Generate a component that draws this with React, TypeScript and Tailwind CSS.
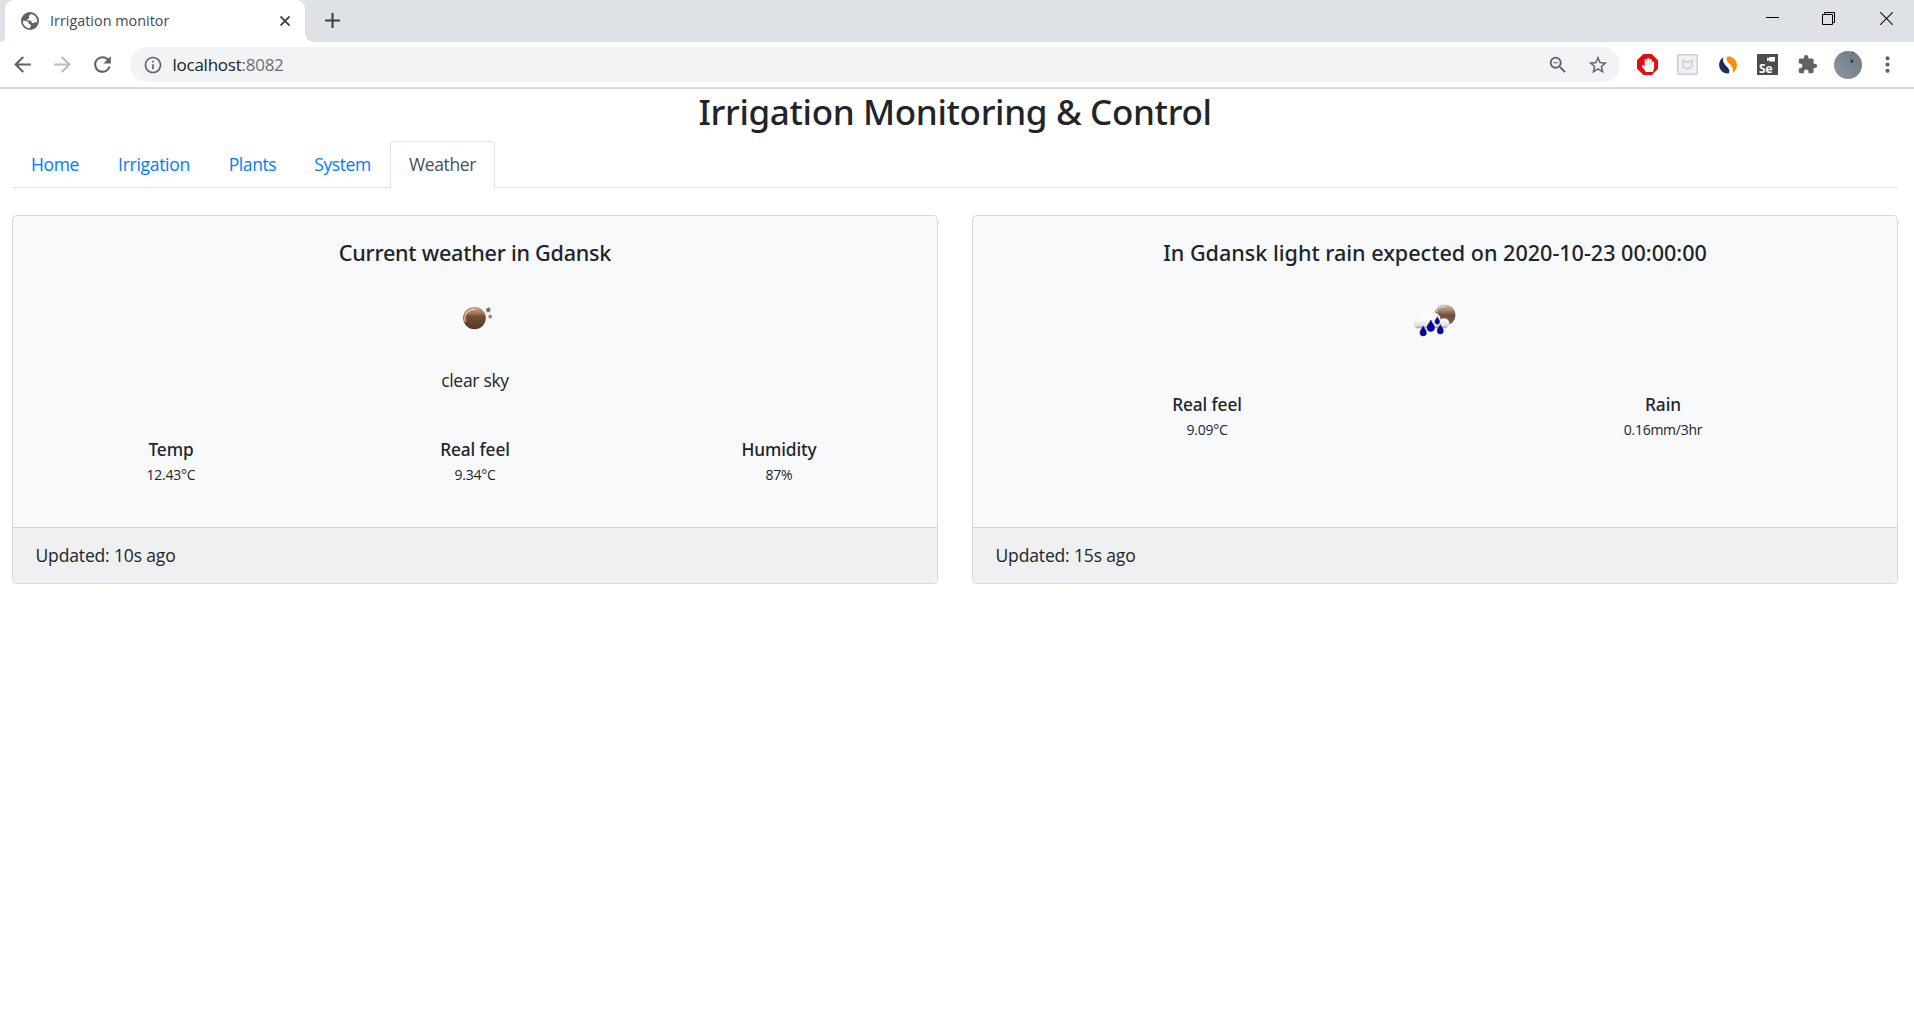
import type { ReactNode } from "react";
import {
  MdArrowBack,
  MdArrowForward,
  MdExtension,
  MdInfoOutline,
  MdMoreVert,
  MdOutlineZoomOut,
  MdRefresh,
  MdStarBorder,
} from "react-icons/md";
import { FaHandPaper } from "react-icons/fa";

const links = [
  { label: "Home", style: "w-[86px] tracking-[-0.35px]" },
  { label: "Irrigation", style: "w-[111px] pl-px tracking-[-0.3px]" },
  { label: "Plants", style: "w-[86px] pl-px tracking-[-0.4px]" },
  { label: "System", style: "w-[95px] tracking-[-0.45px]" },
];

function GlobeIcon() {
  return (
    <svg viewBox="0 0 18 18" className="size-[18px]">
      <circle cx="9" cy="9" r="9" fill="#5f6368" />
      <path
        d="M10.2 1.9c-.6.9-2 1-2.2 2-.2.9.5 1.3.3 2.1-.3.9-1.7.7-2.1 1.5-.3.7.2 1 .9 1.1 1.2.1 2.6-.2 3.3.6.7.9-.1 1.6.9 1.9 1.3.3 1.6-.9 2.8-.8.7 0 1.3.2 1.8.2A7.2 7.2 0 0 0 10.2 1.9Z"
        fill="#fff"
      />
      <path d="M1.8 8.7c1.4-.2 4.2.1 5.3 1.1.8.8.2 1.7.9 2.3.6.5 1.6.2 1.9 1 .2.9-.7 1.2-.9 3.1A7.2 7.2 0 0 1 1.8 8.7Z" fill="#fff" />
    </svg>
  );
}

function Slot({ children }: { children: ReactNode }) {
  return <div className="flex w-10 shrink-0 items-center justify-center">{children}</div>;
}

function TabStrip() {
  return (
    <div className="flex h-[42px] bg-[#dee1e6]">
      <div className="flex w-[5px] items-end bg-white">
        <div className="h-full w-full rounded-br-[5px] bg-[#dee1e6]" />
      </div>
      <div className="flex w-[300px] bg-[#dee1e6]">
        <div className="flex w-full items-center rounded-t-[9px] bg-white pl-4 pr-[15px]">
          <GlobeIcon />
          <span className="ml-[11px] flex-1 whitespace-nowrap text-[14.4px] text-[#45494d]">Irrigation monitor</span>
          <svg viewBox="0 0 10 10" className="size-[10px]" stroke="#3c4043" strokeWidth="1.9">
            <path d="M.5.5l9 9M9.5.5l-9 9" />
          </svg>
        </div>
      </div>
      <div className="w-[9px] bg-white">
        <div className="h-full rounded-bl-[9px] bg-[#dee1e6]" />
      </div>
      <svg viewBox="0 0 15 15" className="ml-[11px] mt-[13px] size-[15px]" stroke="#3c4043" strokeWidth="2.1">
        <path d="M7.5 0v15M0 7.5h15" />
      </svg>
      <div className="ml-auto flex pr-[21px] pt-3">
        <svg viewBox="0 0 13 13" className="mr-[43px] size-[13px]" fill="none" stroke="#000">
          <path d="M0 5.5h13" />
        </svg>
        <svg viewBox="0 0 13 13" className="mr-[45px] size-[13px]" fill="none" stroke="#000">
          <path d="M.5 2.5h10v10H.5zM2.5 2.5v-2h10v10h-2" />
        </svg>
        <svg viewBox="0 0 13 13" className="size-[13px]" fill="none" stroke="#111" strokeWidth="1.1">
          <path d="M.2.2l12.6 12.6M12.8.2L.2 12.8" />
        </svg>
      </div>
    </div>
  );
}

function Toolbar() {
  return (
    <div className="flex h-[47px] items-center border-b-2 border-[#d9dae0] bg-white pl-[2.5px] text-[#5f6368]">
      <Slot>
        <MdArrowBack className="size-[25px]" />
      </Slot>
      <Slot>
        <MdArrowForward className="size-[25px] text-[#babcbe]" />
      </Slot>
      <Slot>
        <MdRefresh className="size-[25px]" />
      </Slot>
      <div className="ml-[7.5px] flex h-[35px] w-[1490px] items-center rounded-full bg-[#f1f3f4] pl-[12.5px] pr-[11px]">
        <MdInfoOutline className="size-5" />
        <span className="ml-[10px] flex-1 text-[17px] tracking-[-0.25px] text-[#202124]">
          localhost<span className="text-[#6b6f73]">:8082</span>
        </span>
        <MdOutlineZoomOut className="mr-[18px] size-[22px]" />
        <MdStarBorder className="size-[22px]" />
      </div>
      <div className="ml-[7.5px] flex items-center">
        <Slot>
          <div className="flex size-[21px] items-center justify-center bg-[#e40d0d] [clip-path:polygon(30%_0,70%_0,100%_30%,100%_70%,70%_100%,30%_100%,0_70%,0_30%)]">
            <FaHandPaper className="size-[14px] text-white" />
          </div>
        </Slot>
        <Slot>
          <svg viewBox="0 0 21 21" className="size-[21px]" fill="none" stroke="#c9ced5">
            <rect x=".8" y=".8" width="19.4" height="19.4" rx="1" strokeWidth="1.5" fill="#eff1f3" />
            <path d="M6.2 6.5l4.3 2 4.3-2v6.3l-4.3 2.2-4.3-2.2z" strokeWidth="1.5" />
          </svg>
        </Slot>
        <Slot>
          <svg viewBox="0 0 18 18" className="size-[18px]">
            <path d="M4.3 1.2C-.8 4.2-1.5 12 3.5 15.8c2 1.5 4.6 2 6.3 1.4 1.4-2.8 0-4.7-2.4-7C4.9 7.8 3.3 5 4.3 1.2Z" fill="#1f2a55" />
            <path d="M13.7 16.8c5.1-3 5.8-10.8.8-14.6-2-1.5-4.6-2-6.3-1.4C6.8 3.6 8.2 5.5 10.6 7.8c2.5 2.4 4.1 5.2 3.1 9Z" fill="#f98f06" />
          </svg>
        </Slot>
        <Slot>
          <div className="relative size-[21px] bg-[#4d4d4d]">
            <svg viewBox="0 0 8 5" className="absolute right-[3px] top-[3px] h-[5px] w-2" fill="#fff">
              <path d="M2.2 0H8v4.6H2.2zM0 .3l2.5 1.5v1.1L0 4.3z" />
            </svg>
            <span className="absolute bottom-0 left-[2px] text-[12px] font-bold leading-[13px] text-white">Se</span>
          </div>
        </Slot>
        <Slot>
          <MdExtension className="size-[21px]" />
        </Slot>
        <Slot>
          <svg viewBox="0 0 28 28" className="size-7">
            <defs>
              <linearGradient id="sky" x1="0" y1="1" x2="1" y2="0">
                <stop offset="0" stopColor="#8c98a6" />
                <stop offset="1" stopColor="#6e7780" />
              </linearGradient>
            </defs>
            <circle cx="14" cy="14" r="14" fill="url(#sky)" />
            <circle cx="18" cy="10.5" r="1.2" fill="#1d2126" />
            <path d="M18.5 1l2 .8M17.5 8.5l-1.5-1" stroke="#30353b" />
          </svg>
        </Slot>
        <Slot>
          <MdMoreVert className="size-[25px]" />
        </Slot>
      </div>
    </div>
  );
}

function ClearNightIcon() {
  return (
    <svg viewBox="0 0 56 56" className="size-14">
      <defs>
        <linearGradient id="moon" x1="0" y1="0" x2="0" y2="1">
          <stop offset="0" stopColor="#d0ae97" />
          <stop offset=".28" stopColor="#a87654" />
          <stop offset=".42" stopColor="#755039" />
          <stop offset="1" stopColor="#573624" />
        </linearGradient>
      </defs>
      <circle cx="27.5" cy="29" r="11.3" fill="url(#moon)" />
      <path d="M18.5 33c-2.3-7 2.2-13 9.7-12.7" fill="none" stroke="#e9d6ca" strokeWidth="1.2" />
      <path d="M41.3 18.3l.9 1.5 1.8.2-1.3 1.3.4 2-1.8-.9-1.8.9.4-2-1.3-1.3 1.8-.2z" fill="#7d543d" stroke="#a98876" strokeWidth=".5" />
      <path d="M43.2 25.5l.7 1.1 1.4.3-1 1 .2 1.5-1.3-.7-1.3.7.2-1.5-1-1 1.4-.3z" fill="#8f6853" stroke="#b59a8b" strokeWidth=".5" />
    </svg>
  );
}

function NightRainIcon() {
  const drops = [
    { x: 16.2, y: 42, s: 1 },
    { x: 23.8, y: 36.8, s: 1.15 },
    { x: 30.3, y: 31.5, s: 0.75 },
    { x: 33.3, y: 40.3, s: 0.95 },
  ];
  return (
    <svg viewBox="0 0 56 56" className="size-14">
      <defs>
        <linearGradient id="rainMoon" x1="0" y1="0" x2="0" y2="1">
          <stop offset="0" stopColor="#d6c3b7" />
          <stop offset=".35" stopColor="#97765f" />
          <stop offset=".5" stopColor="#6d523f" />
          <stop offset="1" stopColor="#76594a" />
        </linearGradient>
        <linearGradient id="cloud" x1="0" y1="0" x2="0" y2="1">
          <stop offset="0" stopColor="#fff" />
          <stop offset=".6" stopColor="#f8f8f8" />
          <stop offset=".85" stopColor="#dcdcdc" />
          <stop offset="1" stopColor="#8e8e8e" />
        </linearGradient>
      </defs>
      <circle cx="38" cy="26" r="10.5" fill="url(#rainMoon)" />
      <path d="M29.5 23c1.5-4 5-6 9-5.5" fill="none" stroke="#efe5df" />
      <path
        d="M12 39.5c-7 0-7-8-1.5-9.500C11 24 14 20.5 18.5 20.5c3.500 0 5.500 1.500 6.500 3.500 4-1 7.500 1 8.500 6.500 5-2.500 9.500.5 8.500 5-.6 2.500-2.500 4-5 4z"
        fill="url(#cloud)"
        stroke="#ebebeb"
        strokeWidth=".6"
      />
      {drops.map((d) => (
        <path
          key={d.x}
          transform={`translate(${d.x} ${d.y}) scale(${d.s})`}
          d="M0-5C.7-2.500 3.200-1 3.200 1.700A3.200 3.200 0 0 1-3.200 1.700C-3.200-1-.7-2.500 0-5Z"
          fill="#0202a4"
          stroke="#10106a"
          strokeWidth=".6"
        />
      ))}
    </svg>
  );
}

function Stat({ name, value }: { name: string; value: string }) {
  return (
    <div className="text-center">
      <h6 className="font-['Noto_Sans',sans-serif] text-[17.3px] font-medium leading-[22px] tracking-[-0.1px]">{name}</h6>
      <p className="text-[14px] leading-[27px] tracking-[-0.25px]">{value}</p>
    </div>
  );
}

type CardProps = { title: string; titleTracking: string; icon: ReactNode; footer: string; children: ReactNode };

function Card({ title, titleTracking, icon, footer, children }: CardProps) {
  return (
    <section className="flex h-[369px] flex-1 flex-col overflow-hidden rounded-[4.5px] border border-[#d6d8da] bg-[#f8f9fb]">
      <div className="flex-1 pt-[23px] text-center">
        <h5 className={`mb-[23px] font-['Noto_Sans',sans-serif] text-[21.6px] font-medium leading-[27px] ${titleTracking}`}>{title}</h5>
        <div className="flex justify-center">{icon}</div>
        {children}
      </div>
      <footer className="h-[56px] border-t border-[#cfd1d3] bg-[#eff0f2] px-[22.5px] text-[17.5px] leading-[54px] tracking-[-0.15px]">{footer}</footer>
    </section>
  );
}

export default function App() {
  return (
    <div className="h-[1021px] overflow-hidden bg-white font-['Open_Sans',sans-serif] text-[#212529]">
      <TabStrip />
      <Toolbar />
      <main className="pl-3 pr-4">
        <h2 className="h-[52px] text-center font-['Noto_Sans',sans-serif] text-[35px] font-medium leading-[45px] tracking-[-0.35px]">
          Irrigation Monitoring &amp; Control
        </h2>
        <nav className="flex h-[47px] text-[17.5px] leading-[46px]">
          {links.map((l) => (
            <div key={l.label} className={`${l.style} border-b border-[#dee2e6] text-center text-[#007bff]`}>
              {l.label}
            </div>
          ))}
          <div className="w-[105px] rounded-t-[4.5px] border border-b-0 border-[#dee2e6] text-center leading-[44px] tracking-[-0.4px] text-[#495057]">
            Weather
          </div>
          <div className="flex-1 border-b border-[#dee2e6]" />
        </nav>
        <div className="mt-[27px] flex gap-[34px]">
          <Card title="Current weather in Gdansk" titleTracking="tracking-[-0.25px]" icon={<ClearNightIcon />} footer="Updated: 10s ago">
            <p className="mt-[22px] text-[17.5px] leading-[27px] tracking-[-0.3px]">clear sky</p>
            <div className="mt-[45px] grid grid-cols-3 px-[6px]">
              <Stat name="Temp" value="12.43°C" />
              <Stat name="Real feel" value="9.34°C" />
              <Stat name="Humidity" value="87%" />
            </div>
          </Card>
          <Card
            title="In Gdansk light rain expected on 2020-10-23 00:00:00"
            titleTracking="tracking-[-0.02px]"
            icon={<NightRainIcon />}
            footer="Updated: 15s ago"
          >
            <div className="mt-[49px] grid grid-cols-2 px-[6px]">
              <Stat name="Real feel" value="9.09°C" />
              <Stat name="Rain" value="0.16mm/3hr" />
            </div>
          </Card>
        </div>
      </main>
    </div>
  );
}
